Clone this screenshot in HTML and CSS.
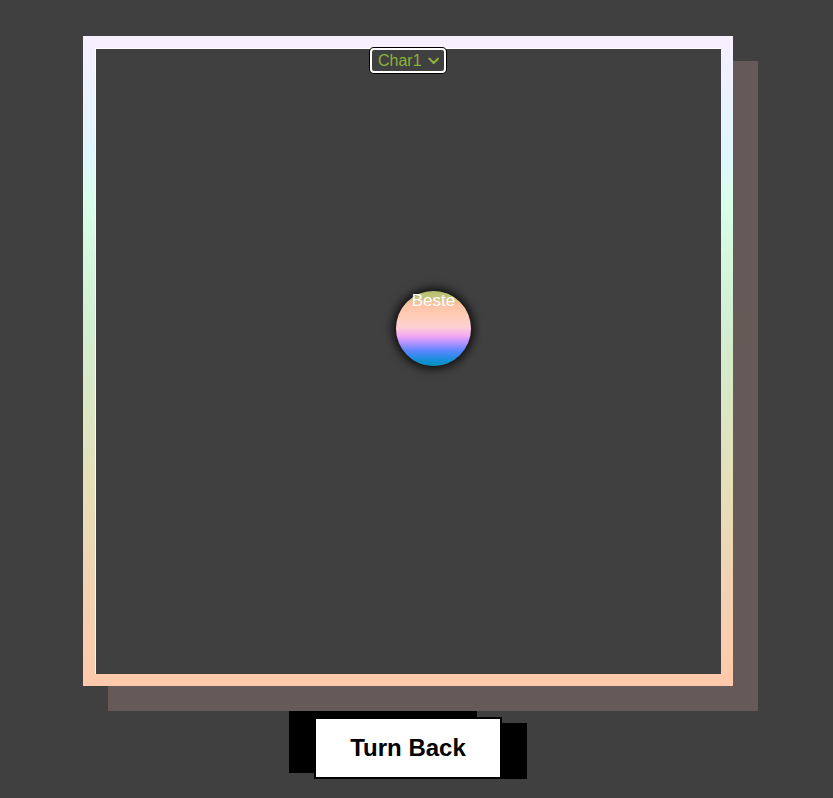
FILE: index.html
```html
<!DOCTYPE html>
<html lang="en">
<head>
<meta charset="utf-8">
<title>Char Board</title>
<link rel="stylesheet" href="styles.css">
</head>
<body>
<main class="page">
  <div class="stage">
    <section class="board">
      <div class="board-inner">
        <div class="char-select" role="combobox" aria-label="Character">
          <span class="char-select-label">Char1</span>
          <svg class="char-select-arrow" width="12" height="8" viewBox="0 0 12 8" aria-hidden="true">
            <path d="M1.5 1.5 L6 6 L10.5 1.5" fill="none" stroke="currentColor" stroke-width="2.2" stroke-linecap="round" stroke-linejoin="round"/>
          </svg>
        </div>
        <div class="token" style="left:301px; top:243px;">
          <span class="token-name">Beste</span>
        </div>
      </div>
    </section>
    <button class="turn-back" type="button">Turn Back</button>
  </div>
</main>
</body>
</html>
```

FILE: styles.css
```css
html, body {
  margin: 0;
  padding: 0;
  background: #404040;
}

body {
  font-family: "Liberation Sans", Arial, sans-serif;
  overflow: hidden;
}

.page {
  padding: 36px 0 0 83px;
}

.stage {
  width: 650px;
  display: flex;
  flex-direction: column;
  align-items: center;
}

.board {
  box-sizing: border-box;
  width: 650px;
  height: 650px;
  border: 12px solid transparent;
  border-image: linear-gradient(180deg,
      #f6f0ff 0%,
      #eaf2ff 8%,
      #e0f6ff 16%,
      #d8ffea 25%,
      #d4f6da 35%,
      #d2eed0 45%,
      #dbe6c2 58%,
      #e6dfb8 70%,
      #f0d3b2 85%,
      #ffcaab 100%) 1;
  box-shadow: 25px 25px 0 #665a58;
  background: #404040;
}

.board-inner {
  position: relative;
  width: 100%;
  height: 100%;
  box-shadow: inset 1px 1px 0 #ffffff;
  display: flex;
  justify-content: center;
  align-items: flex-start;
}

.char-select {
  box-sizing: border-box;
  width: 76px;
  height: 25px;
  border: 2px solid #ffffff;
  border-radius: 4px;
  box-shadow: 0 0 0 1px #000000;
  background: #404040;
  color: #8db23a;
  display: flex;
  align-items: center;
  padding: 0 5px 0 6px;
  gap: 6px;
  font-size: 16px;
  line-height: 1;
}

.char-select-label {
  display: block;
}

.char-select-arrow {
  display: block;
  margin-top: 1px;
}

.token {
  position: absolute;
  width: 75px;
  height: 75px;
  border-radius: 50%;
  background: linear-gradient(180deg,
      #b4c06c 0%,
      #c4c27c 8%,
      #ffc3a2 18%,
      #ffcdbb 35%,
      #ffd0d4 48%,
      #f3a8f4 60%,
      #bb94ff 68%,
      #5a86ff 80%,
      #1f8ee0 90%,
      #0092c0 100%);
  box-shadow: 0 0 10px 3px rgba(0, 0, 0, 0.8);
  display: flex;
  justify-content: center;
}

.token-name {
  color: #ffffff;
  font-size: 17px;
  line-height: 19px;
  margin-top: 0;
}

.turn-back {
  margin-top: 31px;
  box-sizing: border-box;
  width: 188px;
  height: 62px;
  border: 2px solid #000000;
  background: #ffffff;
  color: #000000;
  font-family: "Liberation Sans", Arial, sans-serif;
  font-weight: bold;
  font-size: 24px;
  padding: 0;
  border-radius: 0;
  box-shadow: -25px -6px 0 #000000, 25px 6px 0 #000000;
  cursor: pointer;
}
```
